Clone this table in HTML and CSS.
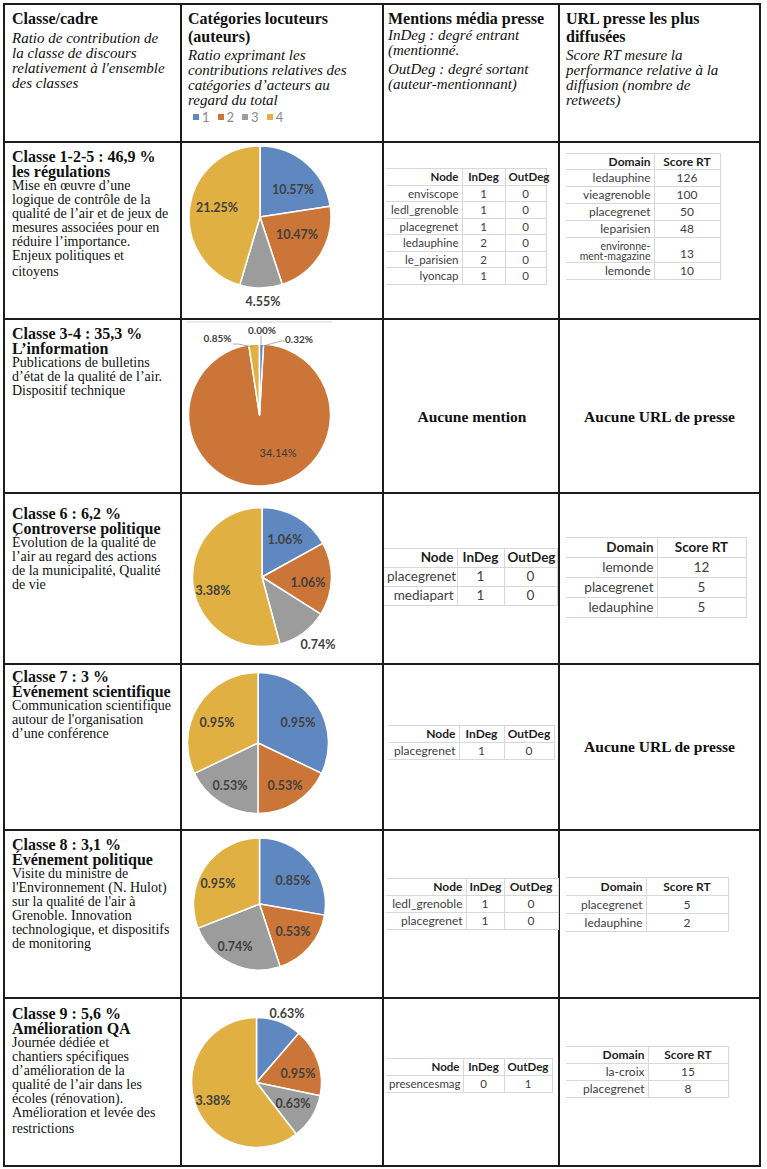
FILE: index.html
```html
<!DOCTYPE html>
<html lang="fr">
<head>
<meta charset="utf-8">
<title>Classes de discours</title>
<link rel="stylesheet" href="styles.css">
</head>
<body>
<div class="sheet">

  <!-- Header row -->
  <div class="cell head h-c1">
    <p class="ttl">Classe/cadre</p>
    <p class="it">Ratio de contribution de<br>la classe de discours<br>relativement à l'ensemble<br>des classes</p>
  </div>
  <div class="cell head h-c2">
    <p class="ttl">Catégories locuteurs<br>(auteurs)</p>
    <p class="it">Ratio exprimant les<br>contributions relatives des<br>catégories d’acteurs au<br>regard du total</p>
    <div class="legend">
      <span class="lg"><i class="sw s1"></i>1</span>
      <span class="lg"><i class="sw s2"></i>2</span>
      <span class="lg"><i class="sw s3"></i>3</span>
      <span class="lg"><i class="sw s4"></i>4</span>
    </div>
  </div>
  <div class="cell head h-c3">
    <p class="ttl">Mentions média presse</p>
    <p class="it it-tight">InDeg : degré entrant<br>(mentionné.</p>
    <p class="it it-gap">OutDeg : degré sortant<br>(auteur-mentionnant)</p>
  </div>
  <div class="cell head h-c4">
    <p class="ttl">URL presse les plus<br>diffusées</p>
    <p class="it">Score RT mesure la<br>performance relative à la<br>diffusion (nombre de<br>retweets)</p>
  </div>

  <!-- Row 1 -->
  <div class="cell desc r1">
    <p class="ttl2">Classe 1-2-5 : 46,9 %<br>les régulations</p>
    <p class="body">Mise en œuvre d’une<br>logique de contrôle de la<br>qualité de l’air et de jeux de<br>mesures associées pour en<br>réduire l’importance.<br>Enjeux politiques et<br><span class="last">citoyens</span></p>
  </div>
  <div class="cell chart">
    <svg class="pie" width="200" height="175" viewBox="0 0 200 175">
      <g class="sl">
        <path class="b" d="M78,74 L78,3 A71,71 0 0 1 148.16,63.14 Z"/>
        <path class="o" d="M78,74 L148.16,63.14 A71,71 0 0 1 100.29,141.41 Z"/>
        <path class="g" d="M78,74 L100.29,141.41 A71,71 0 0 1 57.72,142.04 Z"/>
        <path class="y" d="M78,74 L57.72,142.04 A71,71 0 0 1 78,3 Z"/>
      </g>
      <text class="pl" x="111" y="46">10.57%</text>
      <text class="pl" x="115" y="91">10.47%</text>
      <text class="pl" x="81" y="158">4.55%</text>
      <text class="pl" x="35" y="64">21.25%</text>
    </svg>
  </div>
  <div class="cell media m-r1">
    <table class="xt n1">
      <colgroup><col class="ca"><col class="cb"><col class="cc"></colgroup>
      <tr><th>Node</th><th>InDeg</th><th>OutDeg</th></tr>
      <tr><td>enviscope</td><td>1</td><td>0</td></tr>
      <tr><td>ledl_grenoble</td><td>1</td><td>0</td></tr>
      <tr><td>placegrenet</td><td>1</td><td>0</td></tr>
      <tr><td>ledauphine</td><td>2</td><td>0</td></tr>
      <tr><td>le_parisien</td><td>2</td><td>0</td></tr>
      <tr><td>lyoncap</td><td>1</td><td>0</td></tr>
    </table>
  </div>
  <div class="cell url u-r1">
    <table class="xt u1">
      <colgroup><col class="ca"><col class="cb"></colgroup>
      <tr><th>Domain</th><th>Score RT</th></tr>
      <tr><td>ledauphine</td><td>126</td></tr>
      <tr><td>vieagrenoble</td><td>100</td></tr>
      <tr><td>placegrenet</td><td>50</td></tr>
      <tr><td>leparisien</td><td>48</td></tr>
      <tr class="tall"><td class="squeeze">environne-<br>ment-magazine</td><td class="bottom">13</td></tr>
      <tr><td>lemonde</td><td>10</td></tr>
    </table>
  </div>

  <!-- Row 2 -->
  <div class="cell desc r2">
    <p class="ttl2">Classe 3-4 : 35,3 %<br>L’information</p>
    <p class="body">Publications de bulletins<br>d’état de la qualité de l’air.<br>Dispositif technique</p>
  </div>
  <div class="cell chart">
    <svg class="pie" width="200" height="172" viewBox="0 0 200 172">
      <line class="frame" x1="5" y1="2" x2="150" y2="2"/>
      <g class="sl">
        <path class="o" d="M77.5,95 L81.54,24.11 A71,71 0 1 1 66.76,24.82 Z"/>
        <path class="y" d="M77.5,95 L66.76,24.82 A71,71 0 0 1 77.5,24 Z"/>
        <path class="b" d="M77.5,95 L77.5,24 A71,71 0 0 1 81.54,24.11 Z"/>
      </g>
      <polyline class="lead" points="51,24 56,24 71,27"/>
      <line class="lead" x1="79" y1="16" x2="79" y2="24"/>
      <polyline class="lead" points="103,21 99,21 81,26"/>
      <text class="pl ps" x="35.5" y="18">0.85%</text>
      <text class="pl ps" x="80" y="10">0.00%</text>
      <text class="pl ps" x="117" y="19">0.32%</text>
      <text class="pl pm" x="96" y="132">34.14%</text>
    </svg>
  </div>
  <div class="cell media centered c-r2">
    <p class="none">Aucune mention</p>
  </div>
  <div class="cell url centered c-r2">
    <p class="none">Aucune URL de presse</p>
  </div>

  <!-- Row 3 -->
  <div class="cell desc r3">
    <p class="ttl2">Classe 6 : 6,2 %<br>Controverse politique</p>
    <p class="body">Évolution de la qualité de<br>l’air au regard des actions<br>de la municipalité, Qualité<br>de vie</p>
  </div>
  <div class="cell chart">
    <svg class="pie" width="200" height="169" viewBox="0 0 200 169">
      <g class="sl">
        <path class="b" d="M80,83 L80,13.5 A69.5,69.5 0 0 1 140.87,49.46 Z"/>
        <path class="o" d="M80,83 L140.87,49.46 A69.5,69.5 0 0 1 138.75,120.14 Z"/>
        <path class="g" d="M80,83 L138.75,120.14 A69.5,69.5 0 0 1 97.99,150.13 Z"/>
        <path class="y" d="M80,83 L97.99,150.13 A69.5,69.5 0 1 1 80,13.5 Z"/>
      </g>
      <text class="pl" x="103" y="45">1.06%</text>
      <text class="pl" x="126" y="88">1.06%</text>
      <text class="pl" x="136" y="150">0.74%</text>
      <text class="pl" x="31" y="96">3.38%</text>
    </svg>
  </div>
  <div class="cell media m-r3">
    <table class="xt n3">
      <colgroup><col class="ca"><col class="cb"><col class="cc"></colgroup>
      <tr><th>Node</th><th>InDeg</th><th>OutDeg</th></tr>
      <tr><td>placegrenet</td><td>1</td><td>0</td></tr>
      <tr><td>mediapart</td><td>1</td><td>0</td></tr>
    </table>
  </div>
  <div class="cell url u-r3">
    <table class="xt u3">
      <colgroup><col class="ca"><col class="cb"></colgroup>
      <tr><th>Domain</th><th>Score RT</th></tr>
      <tr><td>lemonde</td><td>12</td></tr>
      <tr><td>placegrenet</td><td>5</td></tr>
      <tr><td>ledauphine</td><td>5</td></tr>
    </table>
  </div>

  <!-- Row 4 -->
  <div class="cell desc r4">
    <p class="ttl2">Classe 7 : 3 %<br>Événement scientifique</p>
    <p class="body">Communication scientifique<br>autour de l'organisation<br>d’une conférence</p>
  </div>
  <div class="cell chart">
    <svg class="pie" width="200" height="164" viewBox="0 0 200 164">
      <g class="sl">
        <path class="b" d="M76,78 L76,7.5 A70.5,70.5 0 0 1 139.63,108.35 Z"/>
        <path class="o" d="M76,78 L139.63,108.35 A70.5,70.5 0 0 1 76,148.5 Z"/>
        <path class="g" d="M76,78 L76,148.5 A70.5,70.5 0 0 1 12.37,108.35 Z"/>
        <path class="y" d="M76,78 L12.37,108.35 A70.5,70.5 0 0 1 76,7.5 Z"/>
      </g>
      <text class="pl" x="116" y="57">0.95%</text>
      <text class="pl" x="35" y="57">0.95%</text>
      <text class="pl" x="48" y="120">0.53%</text>
      <text class="pl" x="103" y="120">0.53%</text>
    </svg>
  </div>
  <div class="cell media m-r4">
    <table class="xt n4">
      <colgroup><col class="ca"><col class="cb"><col class="cc"></colgroup>
      <tr><th>Node</th><th>InDeg</th><th>OutDeg</th></tr>
      <tr><td>placegrenet</td><td>1</td><td>0</td></tr>
    </table>
  </div>
  <div class="cell url centered">
    <p class="none">Aucune URL de presse</p>
  </div>

  <!-- Row 5 -->
  <div class="cell desc r5">
    <p class="ttl2">Classe 8 : 3,1 %<br>Événement politique</p>
    <p class="body">Visite du ministre de<br>l'Environnement (N. Hulot)<br>sur la qualité de l'air à<br>Grenoble. Innovation<br>technologique, et dispositifs<br>de monitoring</p>
  </div>
  <div class="cell chart">
    <svg class="pie" width="200" height="166" viewBox="0 0 200 166">
      <g class="sl">
        <path class="b" d="M77.5,73 L77.5,7 A66,66 0 0 1 142.56,84.12 Z"/>
        <path class="o" d="M77.5,73 L142.56,84.12 A66,66 0 0 1 98.11,135.7 Z"/>
        <path class="g" d="M77.5,73 L98.11,135.7 A66,66 0 0 1 16.05,97.08 Z"/>
        <path class="y" d="M77.5,73 L16.05,97.08 A66,66 0 0 1 77.5,7 Z"/>
      </g>
      <text class="pl" x="111" y="49">0.85%</text>
      <text class="pl" x="111" y="100">0.53%</text>
      <text class="pl" x="53" y="115">0.74%</text>
      <text class="pl" x="36" y="52">0.95%</text>
    </svg>
  </div>
  <div class="cell media m-r5">
    <table class="xt n5">
      <colgroup><col class="ca"><col class="cb"><col class="cc"></colgroup>
      <tr><th>Node</th><th>InDeg</th><th>OutDeg</th></tr>
      <tr><td>ledl_grenoble</td><td>1</td><td>0</td></tr>
      <tr><td>placegrenet</td><td>1</td><td>0</td></tr>
    </table>
  </div>
  <div class="cell url u-r5">
    <table class="xt u5">
      <colgroup><col class="ca"><col class="cb"></colgroup>
      <tr><th>Domain</th><th>Score RT</th></tr>
      <tr><td>placegrenet</td><td>5</td></tr>
      <tr><td>ledauphine</td><td>2</td></tr>
    </table>
  </div>

  <!-- Row 6 -->
  <div class="cell desc r6">
    <p class="ttl2">Classe 9 : 5,6 %<br>Amélioration QA</p>
    <p class="body">Journée dédiée et<br>chantiers spécifiques<br>d’amélioration de la<br>qualité de l’air dans les<br>écoles (rénovation).<br>Amélioration et levée des<br><span class="last">restrictions</span></p>
  </div>
  <div class="cell chart">
    <svg class="pie" width="200" height="166" viewBox="0 0 200 166">
      <g class="sl">
        <path class="b" d="M74.5,83.5 L74.5,18.5 A65,65 0 0 1 116.8,34.15 Z"/>
        <path class="o" d="M74.5,83.5 L116.8,34.15 A65,65 0 0 1 138.13,96.79 Z"/>
        <path class="g" d="M74.5,83.5 L138.13,96.79 A65,65 0 0 1 114.16,135 Z"/>
        <path class="y" d="M74.5,83.5 L114.16,135 A65,65 0 1 1 74.5,18.5 Z"/>
      </g>
      <text class="pl" x="105" y="14">0.63%</text>
      <text class="pl" x="116" y="74">0.95%</text>
      <text class="pl" x="111" y="104">0.63%</text>
      <text class="pl" x="31" y="101">3.38%</text>
    </svg>
  </div>
  <div class="cell media m-r6">
    <table class="xt n6">
      <colgroup><col class="ca"><col class="cb"><col class="cc"></colgroup>
      <tr><th>Node</th><th>InDeg</th><th>OutDeg</th></tr>
      <tr><td>presencesmag</td><td>0</td><td>1</td></tr>
    </table>
  </div>
  <div class="cell url u-r6">
    <table class="xt u6">
      <colgroup><col class="ca"><col class="cb"></colgroup>
      <tr><th>Domain</th><th>Score RT</th></tr>
      <tr><td>la-croix</td><td>15</td></tr>
      <tr><td>placegrenet</td><td>8</td></tr>
    </table>
  </div>

</div>
</body>
</html>
```

FILE: styles.css
```css
html, body {
  margin: 0;
  padding: 0;
  background: #ffffff;
}

body {
  font-family: "Liberation Serif", serif;
  color: #111;
}

.sheet {
  box-sizing: border-box;
  margin: 3px 0 0 3px;
  width: 758px;
  padding: 2px;
  display: grid;
  grid-template-columns: 175px 200px 174px 199px;
  grid-template-rows: 136px 175px 172px 169px 164px 166px 166px;
  gap: 2px;
  background: #1c1c1c;
}

.cell {
  background: #ffffff;
  box-sizing: border-box;
  min-width: 0;
}

p { margin: 0; }

/* ---------- header ---------- */
.head { padding-top: 5px; }
.h-c1 { padding-left: 7px; }
.h-c2 { padding-left: 6px; }
.h-c3 { padding-left: 4px; }
.h-c4 { padding-left: 6px; }

.ttl {
  font: bold 16px/18px "Liberation Serif", serif;
  white-space: nowrap;
}

.it {
  font: italic 15px/15px "Liberation Serif", serif;
  margin-top: 3px;
  white-space: nowrap;
}
.h-c2 .it, .h-c4 .it { margin-top: 2px; }
.it-tight { margin-top: 0; }
.it-gap { margin-top: 4px; }

.legend {
  margin-top: 2px;
  display: flex;
  gap: 8px;
  padding-left: 5px;
  font: 13px/14px Lato, "Liberation Sans", sans-serif;
  color: #8a8a8a;
}
.lg {
  display: flex;
  align-items: center;
  gap: 3px;
}
.sw {
  display: inline-block;
  width: 6px;
  height: 6px;
}
.s1 { background: #6088c0; }
.s2 { background: #cc7538; }
.s3 { background: #9c9c9c; }
.s4 { background: #e1b042; }

/* ---------- description column ---------- */
.desc { padding-left: 7px; padding-top: 6px; }
.r3 { padding-top: 12px; }
.r4 { padding-top: 4px; }
.r6 { padding-top: 7px; }

.ttl2 {
  font: bold 16px/15px "Liberation Serif", serif;
  white-space: nowrap;
}
.body {
  margin-top: 0;
  font: 14px/14px "Liberation Serif", serif;
  white-space: nowrap;
}
.last {
  display: inline-block;
  margin-top: 2px;
}

/* ---------- charts ---------- */
.chart { overflow: hidden; }
.pie { display: block; }
.sl path { stroke: #ffffff; stroke-width: 1.5; stroke-linejoin: round; }
.b { fill: #6088c0; }
.o { fill: #cc7538; }
.g { fill: #9c9c9c; }
.y { fill: #e1b042; }
.pl {
  font: bold 12.5px Lato, "Liberation Sans", sans-serif;
  fill: #404040;
  text-anchor: middle;
  dominant-baseline: central;
}
.ps { font-size: 10px; }
.pm { font-size: 11px; font-weight: normal; fill: #3a3a3a; }
.lead { fill: none; stroke: #9a9a9a; stroke-width: 0.8; }
.frame { stroke: #d4d4d4; stroke-width: 1; }

/* ---------- text-only cells ---------- */
.centered {
  display: flex;
  align-items: center;
  justify-content: center;
}
.c-r2 { padding-top: 22px; }
.none {
  font: bold 15.5px/18px "Liberation Serif", serif;
  color: #111;
}

/* ---------- excel-like tables ---------- */
.media { padding-left: 2px; }
.url { padding-left: 6px; }
.url.centered { padding-left: 0; }

.m-r1 { padding-top: 25px; }
.u-r1 { padding-top: 10px; }
.m-r3 { padding-top: 54px; padding-left: 0; }
.u-r3 { padding-top: 43px; }
.m-r4 { padding-top: 60px; padding-left: 4px; }
.m-r5 { padding-top: 47px; }
.u-r5 { padding-top: 46px; }
.m-r6 { padding-top: 59px; }
.u-r6 { padding-top: 47px; }

.xt {
  border-collapse: collapse;
  table-layout: fixed;
  font-family: Lato, "Liberation Sans", sans-serif;
  color: #404040;
}
.xt th, .xt td {
  border-right: 1px solid #d8d8d8;
  border-bottom: 1px solid #d8d8d8;
  padding: 0 3px;
  white-space: nowrap;
  text-align: center;
  vertical-align: middle;
  line-height: 1;
}
.xt tr:first-child th { border-top: 1px solid #d8d8d8; }
.xt th { font-weight: bold; color: #1e1e1e; }
.xt th:first-child, .xt td:first-child { text-align: right; }

.n1 { width: 160px; font-size: 11.5px; }
.n1 .ca { width: 76px; } .n1 .cb { width: 43px; } .n1 .cc { width: 41px; }
.n1 tr { height: 16.5px; }

.u1 { width: 154px; font-size: 12px; }
.u1 .ca { width: 88px; } .u1 .cb { width: 66px; }
.u1 tr { height: 17px; }
.u1 tr:first-child { height: 16px; }
.u1 tr.tall { height: 25px; }
.squeeze { font-size: 10.5px; line-height: 10px !important; padding-top: 1px !important; }
.bottom { vertical-align: bottom !important; padding-bottom: 2px !important; }

.n3 { width: 173px; font-size: 13.5px; }
.n3 .ca { width: 73px; } .n3 .cb { width: 47px; } .n3 .cc { width: 53px; }
.n3 tr { height: 19px; }

.u3 { width: 180px; font-size: 13.5px; }
.u3 .ca { width: 91px; } .u3 .cb { width: 89px; }
.u3 tr { height: 20px; }

.n4 { width: 166px; font-size: 12px; }
.n4 .ca { width: 71px; } .n4 .cb { width: 45px; } .n4 .cc { width: 50px; }
.n4 tr { height: 17px; }

.n5 { width: 172px; font-size: 12px; }
.n5 .ca { width: 80px; } .n5 .cb { width: 38px; } .n5 .cc { width: 54px; }
.n5 tr { height: 17px; }

.u5 { width: 162px; font-size: 12px; }
.u5 .ca { width: 80px; } .u5 .cb { width: 82px; }
.u5 tr { height: 18px; }

.n6 { width: 166px; font-size: 11.5px; }
.n6 .ca { width: 77px; } .n6 .cb { width: 41px; } .n6 .cc { width: 48px; }
.n6 tr { height: 17px; }

.u6 { width: 162px; font-size: 12px; }
.u6 .ca { width: 82px; } .u6 .cb { width: 80px; }
.u6 tr { height: 17px; }
```
